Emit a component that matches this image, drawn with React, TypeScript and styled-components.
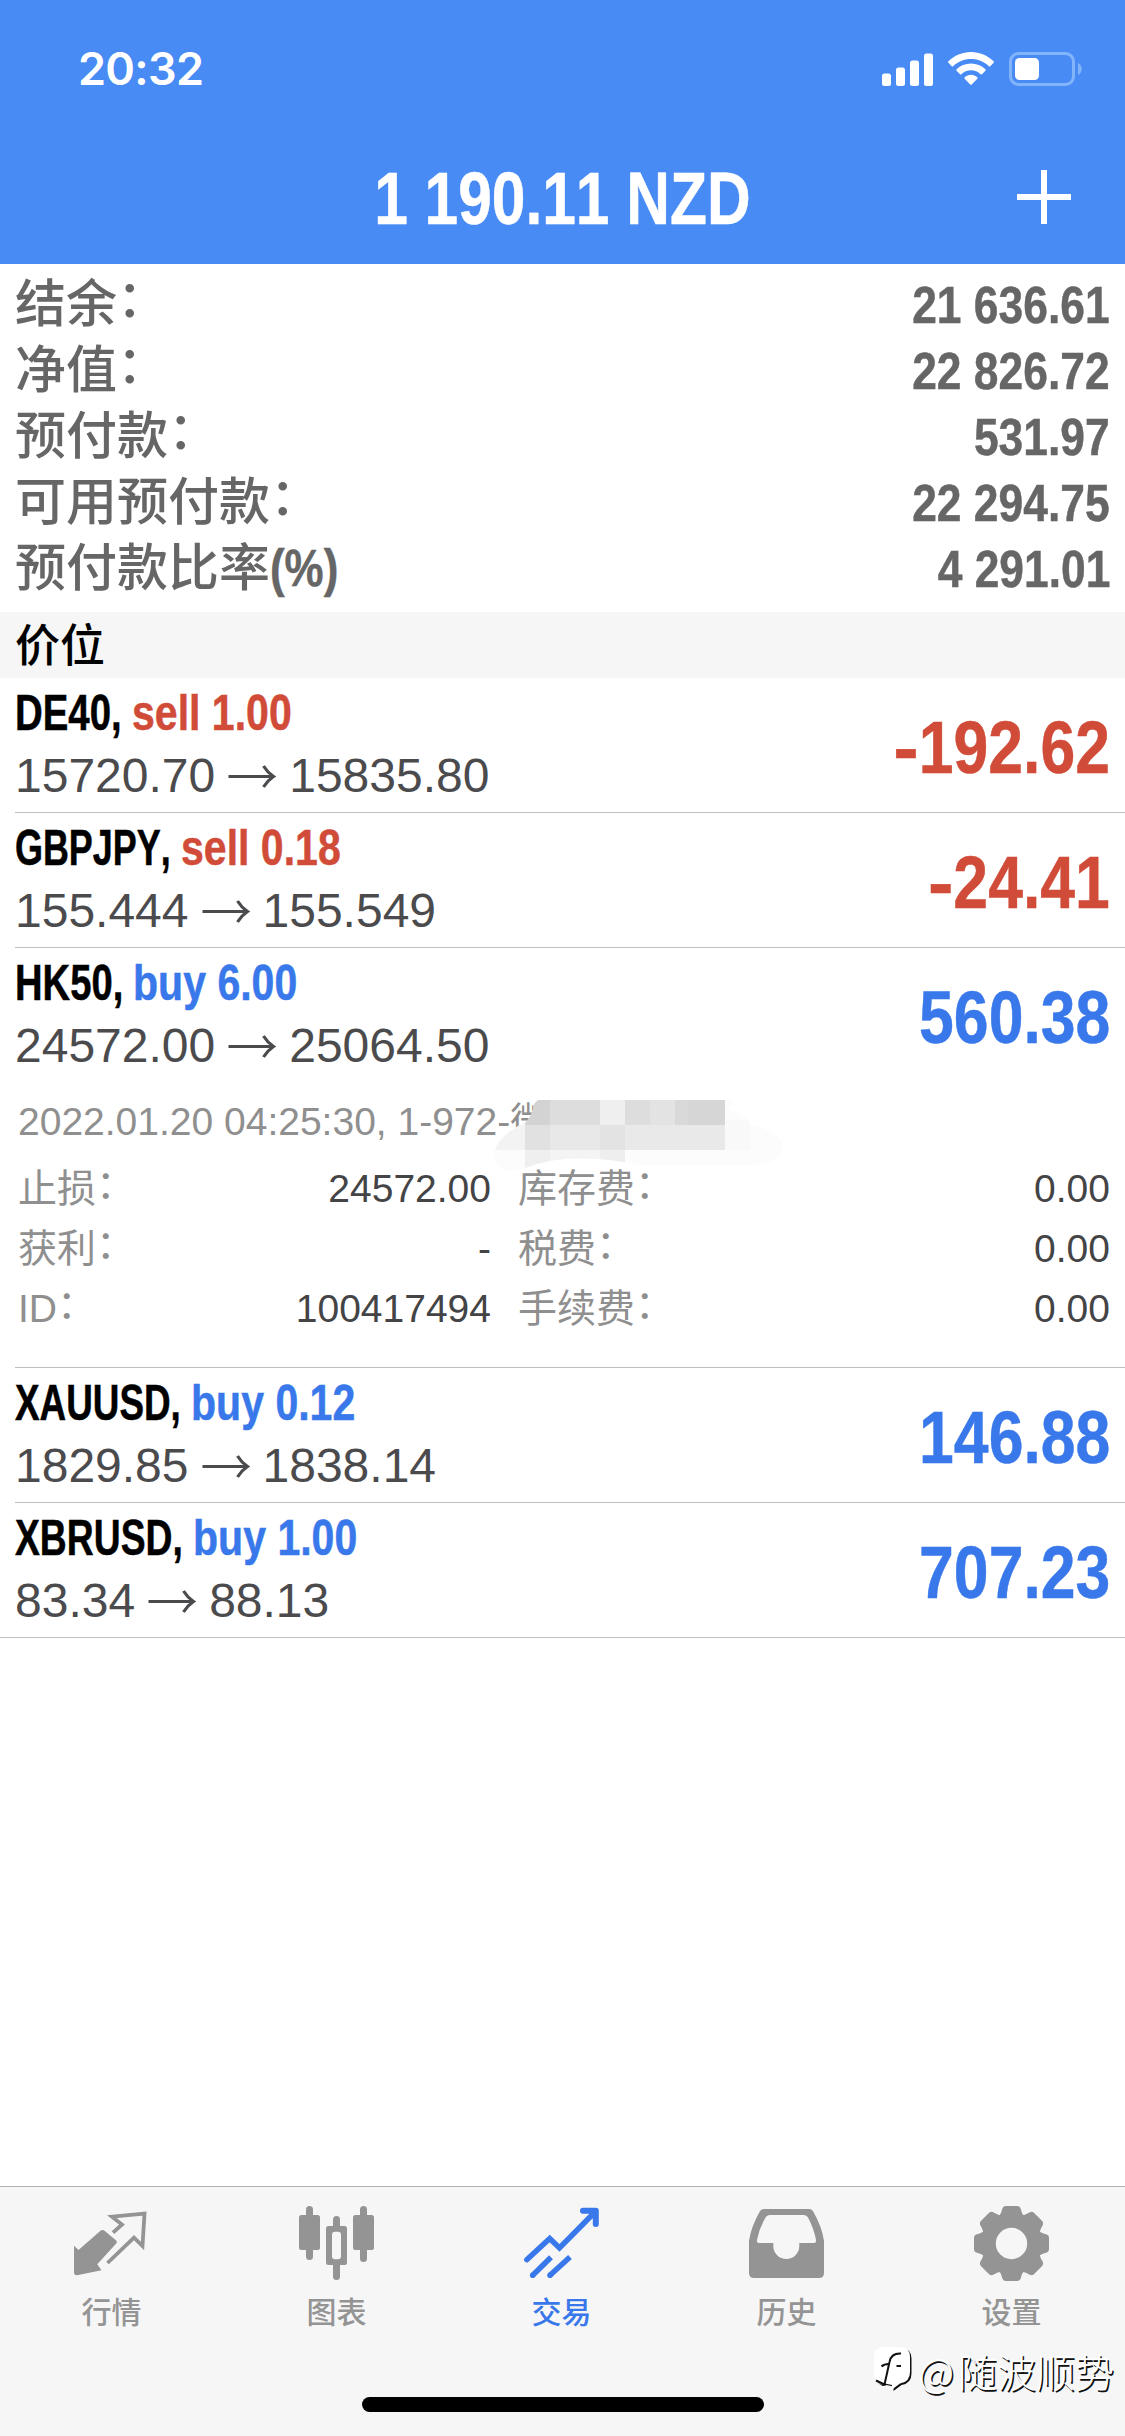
import React, { useLayoutEffect, useRef, useState } from "react";
import styled, { createGlobalStyle } from "styled-components";

const sans = `"Liberation Sans", "Noto Sans CJK SC", sans-serif`;
const color = {
  header: "#488bf5",
  panel: "#f6f6f6",
  rule: "#bfbfc1",
  buy: "#3978ea",
  sell: "#d14c38",
  muted: "#8f8f8f",
  value: "#444446",
  label: "#666666",
  icon: "#949494",
};

const GlobalStyle = createGlobalStyle`
  *, *::before, *::after { box-sizing: border-box; }
  body { margin: 0; background: #fff; font-family: ${sans}; font-kerning: none; }
`;

const Screen = styled.div`
  width: 1125px;
  height: 2436px;
  display: flex;
  flex-direction: column;
  background: #fff;
  overflow: hidden;
`;

/* Condensed text: squeezed horizontally to the requested width */
const FitBox = styled.span<{ $width: number }>`
  display: inline-block;
  width: ${(p) => p.$width}px;
  white-space: nowrap;
`;
const FitInner = styled.span`
  display: inline-block;
  transform-origin: left center;
  -webkit-text-stroke: 0.5px currentColor;
`;
function FitText({ width, children }: { width: number; children: React.ReactNode }) {
  const ref = useRef<HTMLSpanElement>(null);
  const [scale, setScale] = useState(0.8);
  useLayoutEffect(() => {
    if (ref.current) setScale(width / ref.current.offsetWidth);
  }, [width]);
  return (
    <FitBox $width={width}>
      <FitInner ref={ref} style={{ transform: `scaleX(${scale})` }}>
        {children}
      </FitInner>
    </FitBox>
  );
}

const Condensed = styled.span<{ $scale?: number; $origin?: string }>`
  display: inline-block;
  white-space: nowrap;
  font-weight: 700;
  -webkit-text-stroke: 0.5px currentColor;
  transform: scaleX(${(p) => p.$scale ?? 0.845});
  transform-origin: ${(p) => p.$origin ?? "right"} center;
`;

/* Header */
const Header = styled.header`
  height: 264px;
  flex: none;
  background: ${color.header};
  color: #fff;
`;
const StatusBar = styled.div`
  height: 132px;
  padding: 6px 43px 0 78px;
  display: flex;
  align-items: center;
  justify-content: space-between;
`;
const Clock = styled.div`
  font: 600 45px/60px Inter, ${sans};
  letter-spacing: -0.7px;
`;
const StatusIcons = styled.div`
  display: flex;
  align-items: center;
  gap: 15px;
`;
const NavBar = styled.div`
  height: 132px;
  padding: 0 54px 2px;
  display: grid;
  grid-template-columns: 54px 1fr 54px;
  align-items: center;
`;
const Title = styled.h1`
  grid-column: 2;
  margin: 4px 0 0;
  text-align: center;
  font-size: 74px;
  line-height: 84px;
`;

/* Account summary */
const Summary = styled.section`
  padding: 7px 15px 11px;
  color: ${color.label};
`;
const SummaryRow = styled.div`
  height: 66px;
  display: flex;
  justify-content: space-between;
  font-size: 51px;
  line-height: 67px;
  font-weight: 500;
`;
const SummaryValue = styled(Condensed)`
  font-size: 52.5px;
`;
const Paren = styled.span`
  font-weight: 700;
`;
/* Full-width colon, lifted to the optical centre of the line */
const Colon = styled.span`
  vertical-align: 0.1em;
  line-height: 0;
`;
const SectionTitle = styled.h2`
  height: 66px;
  margin: 0;
  padding: 1px 0 0 15px;
  background: ${color.panel};
  color: #000;
  font-size: 45px;
  line-height: 67px;
  font-weight: 500;
`;

/* Positions */
const List = styled.ul`
  flex: 1;
  margin: 0;
  padding: 0;
  list-style: none;
`;
const Item = styled.li<{ $last: boolean }>`
  margin-left: ${(p) => (p.$last ? 0 : 15)}px;
  padding-left: ${(p) => (p.$last ? 15 : 0)}px;
  border-bottom: 1px solid ${color.rule};
`;
const ItemHead = styled.div`
  height: 134px;
  padding: 5px 15px 0 0;
  display: flex;
  justify-content: space-between;
`;
const Order = styled.div`
  font-size: 48px;
`;
const Symbol = styled.div`
  display: flex;
  gap: 10px;
  font-size: 49.5px;
  line-height: 60px;
  font-weight: 700;
  color: #000;
`;
const Side = styled(Condensed)<{ $side: string }>`
  color: ${(p) => (p.$side === "buy" ? color.buy : color.sell)};
`;
const Prices = styled.div`
  display: flex;
  align-items: center;
  gap: 13px;
  height: 66px;
  line-height: 66px;
  color: #4b4b4e;
`;
const Profit = styled.div<{ $gain: boolean }>`
  font-size: 74px;
  line-height: 130px;
  color: ${(p) => (p.$gain ? color.buy : color.sell)};
`;
const Minus = styled.span`
  display: inline-block;
  transform: scaleX(1.22);
  transform-origin: right center;
`;

/* Expanded position details */
const Details = styled.div`
  position: relative;
  height: 285px;
  padding: 10px 15px 0 3px;
  font-size: 39px;
  line-height: 60px;
  color: ${color.muted};
`;
const Comment = styled.div`
  height: 67px;
  white-space: pre;
`;
const DetailGrid = styled.dl`
  margin: 0;
  display: grid;
  grid-template-columns: 473px 592px;
  column-gap: 27px;
`;
const Detail = styled.div`
  display: flex;
  justify-content: space-between;
  height: 60px;
`;
const Term = styled.dt``;
const Value = styled.dd`
  margin: 0;
  color: ${color.value};
`;
const Smudge = styled.svg`
  position: absolute;
  left: 475px;
  top: 13px;
`;

/* Tab bar */
const TabBar = styled.nav`
  position: relative;
  flex: none;
  height: 250px;
  border-top: 1px solid #b0b0b0;
  background: ${color.panel};
  display: flex;
  flex-direction: column;
  align-items: center;
  justify-content: space-between;
`;
const Tabs = styled.div`
  width: 100%;
  padding-top: 19px;
  display: grid;
  grid-template-columns: repeat(5, 1fr);
`;
const Tab = styled.div<{ $active?: boolean }>`
  display: flex;
  flex-direction: column;
  align-items: center;
  gap: 10px;
  color: ${(p) => (p.$active ? color.buy : color.icon)};
  font-size: 30px;
  line-height: 43px;
  font-weight: 500;
  padding-right: 2px;
`;
const HomeIndicator = styled.div`
  width: 402px;
  height: 15px;
  margin-bottom: 24px;
  border-radius: 8px;
  background: #000;
`;
const Credit = styled.div`
  position: absolute;
  right: 11px;
  bottom: 38px;
  display: flex;
  align-items: center;
  color: #fff;
  font: 300 39px/56px "Noto Sans CJK SC", sans-serif;
  text-shadow: 1.5px 1.5px 0.5px #111;
`;
const At = styled.span`
  margin: 0 4px 0 3px;
`;

function Signal() {
  return (
    <svg width="51" height="33" viewBox="0 0 51 33" fill="#fff">
      <rect x="0" y="20.5" width="9" height="12.5" rx="2.5" />
      <rect x="14" y="14.5" width="9" height="18.5" rx="2.5" />
      <rect x="28" y="7.5" width="9" height="25.5" rx="2.5" />
      <rect x="42" y="0.5" width="9" height="32.5" rx="2.5" />
    </svg>
  );
}
function Wifi() {
  return (
    <svg width="46" height="34" viewBox="0 0 46 34" fill="#fff">
      <path d="M23 0C14.300 0 6.300 3.500 .400 9.300a1 1 0 0 0 0 1.400l3.300 3.500a1 1 0 0 0 1.400 0C9.800 9.700 16.100 7 23 7s13.200 2.700 17.900 7.200a1 1 0 0 0 1.400 0l3.300-3.500a1 1 0 0 0 0-1.400C39.700 3.500 31.700 0 23 0z" />
      <path d="M23 11.500c-5.600 0-10.700 2.200-14.400 5.800a1 1 0 0 0 0 1.400l3.400 3.500a1 1 0 0 0 1.400 0c2.500-2.400 5.900-3.900 9.600-3.900s7.100 1.500 9.600 3.900a1 1 0 0 0 1.400 0l3.400-3.500a1 1 0 0 0 0-1.400c-3.700-3.600-8.800-5.800-14.400-5.800z" />
      <path d="M23 22.800c-2.400 0-4.600.900-6.300 2.400a1 1 0 0 0 0 1.500l5.500 5.900a1 1 0 0 0 1.500 0l5.600-5.900a1 1 0 0 0 0-1.500c-1.700-1.500-3.900-2.400-6.300-2.400z" />
    </svg>
  );
}
function Battery() {
  return (
    <svg width="73" height="34" viewBox="0 0 73 34">
      <rect x="1.500" y="1.500" width="63" height="31" rx="8" fill="none" stroke="#82b4fb" strokeWidth="3" />
      <rect x="6" y="6" width="24" height="22" rx="4.500" fill="#fff" />
      <path d="M69 11c5 2 5 10 0 12z" fill="#82b4fb" />
    </svg>
  );
}
function Plus() {
  return (
    <svg width="54" height="54" viewBox="0 0 54 54" stroke="#fff" strokeWidth="6">
      <path d="M27 0v54M0 27h54" />
    </svg>
  );
}
function Arrow() {
  return (
    <svg width="48" height="24" viewBox="0 0 48 24" fill="none" stroke="currentColor" strokeWidth="3.200">
      <path d="M.500 12.500h44M35.500 2q4 6.500 10 10.500q-6 4-10 10.500" />
    </svg>
  );
}

function QuotesIcon() {
  return (
    <svg width="75" height="75" viewBox="0 0 75 75" fill="currentColor">
      <path d="M0 39.700L4.500 44 26.500 24.800q2-1.600 4 0L42.200 34.500q1.500 1.500 0 3L23.300 58.300 27.500 64.300 3 69.300q-3 0-3-3z" />
      <path
        d="M39 26.700L48 18.500 38 10.700 70.500 7.700 68.500 40 60 31.700 33.500 57"
        fill="none"
        stroke="currentColor"
        strokeWidth="3.800"
      />
    </svg>
  );
}
function ChartIcon() {
  return (
    <svg width="75" height="75" viewBox="0 0 75 75" fill="currentColor">
      <rect x="7" y="0" width="7" height="54" rx="3.500" />
      <rect x="0" y="9" width="21" height="35" rx="2.500" />
      <rect x="34" y="10" width="7" height="64" rx="3.500" />
      <rect x="27" y="20" width="21" height="39" rx="2.500" />
      <rect x="33" y="25.700" width="9" height="27.600" rx="3" fill={color.panel} />
      <rect x="61" y="0" width="7" height="56" rx="3.500" />
      <rect x="54" y="9" width="21" height="35" rx="2.500" />
    </svg>
  );
}
function TradeIcon() {
  return (
    <svg width="75" height="75" viewBox="0 0 75 75" fill="none" stroke="currentColor" strokeWidth="5.500">
      <path d="M2.800 53.700L25.700 32.500 35.500 42 70 7" strokeLinecap="round" />
      <path d="M59 4.800H71.800V18" strokeWidth="6" strokeLinecap="round" strokeLinejoin="round" />
      <path d="M64 6h8v9z" fill="currentColor" stroke="none" />
      <path d="M8.700 69.300L27 51.300M26 69.300L46 51" />
      <circle cx="8.700" cy="69.300" r="2.800" fill="currentColor" stroke="none" />
      <circle cx="26" cy="69.300" r="2.800" fill="currentColor" stroke="none" />
    </svg>
  );
}
function HistoryIcon() {
  return (
    <svg width="75" height="75" viewBox="0 0 75 75" fill="currentColor" fillRule="evenodd">
      <path d="M15 3H60q3 0 4.500 3Q73 21 75 35V67q0 5-5 5H5q-5 0-5-5V35Q2 21 10.500 6 12 3 15 3zM21 9q-3.500 0-5 3.500Q10 23 8 34q-.500 3 2 3H24.300V40a13 13 0 0 0 26 0V37H65q2.500 0 2-3-2-11-7.500-21.500Q58 9 54.500 9z" />
    </svg>
  );
}
function SettingsIcon() {
  return (
    <svg width="75" height="75" viewBox="-37.500 -37.500 75 75" fill="currentColor">
      <circle r="22.900" fill="none" stroke="currentColor" strokeWidth="14.400" />
      {[0, 45, 90, 135, 180, 225, 270, 315].map((angle) => (
        <path
          key={angle}
          transform={`rotate(${angle})`}
          d="M-13.500-26.500Q-10.500-29-9.300-34.500-8.500-37.500-5.500-37.500H5.500Q8.500-37.500 9.300-34.500 10.500-29 13.500-26.500L0-20z"
        />
      ))}
    </svg>
  );
}
function CreditLogo() {
  const bubble = "M11 1H27Q37 1 37 11V26Q37 36 27 37.500L19 43.500V39L12 37.500 8 38.500Q1 35 1 28V12Q1 1 11 1z";
  return (
    <svg width="42" height="48" viewBox="0 0 42 48">
      <path d={bubble} transform="translate(1.500 1.500)" fill="#111" />
      <path d={bubble} fill="#fff" />
      <path d="M28 7.500Q18 7 16.500 16L11.500 38.500 3 34.500" fill="none" stroke="#111" strokeWidth="2" />
      <path d="M8.500 20.500Q11 18 16 18M23.500 20H28" fill="none" stroke="#111" strokeWidth="2.200" />
    </svg>
  );
}

function MosaicSmudge() {
  return (
    <Smudge width="300" height="90" viewBox="490 1095 300 90">
      <defs>
        <clipPath id="smear">
          <path d="M538 1100H725L733 1102 727 1110Q750 1116 750 1125 780 1132 783 1145 780 1165 750 1165H640Q570 1150 525 1168 494 1178 494 1152 500 1134 526 1122 533 1114 534 1104z" />
        </clipPath>
      </defs>
      <g clipPath="url(#smear)">
        <rect x="490" y="1095" width="300" height="90" fill="#fcfcfc" />
        <rect x="725" y="1120" width="25" height="30" fill="#f9f9f9" />
        <rect x="490" y="1125" width="35" height="25" fill="#f3f3f3" />
        <rect x="525" y="1100" width="25" height="25" fill="#d3d3d3" />
        <rect x="550" y="1100" width="50" height="25" fill="#dddddd" />
        <rect x="600" y="1100" width="25" height="25" fill="#efefef" />
        <rect x="625" y="1100" width="25" height="25" fill="#dddddd" />
        <rect x="650" y="1100" width="25" height="25" fill="#e3e3e3" />
        <rect x="675" y="1100" width="13" height="25" fill="#d9d9d9" />
        <rect x="688" y="1100" width="37" height="25" fill="#d6d6d6" />
        <rect x="525" y="1125" width="25" height="25" fill="#e1e1e1" />
        <rect x="550" y="1125" width="50" height="25" fill="#e8e8e8" />
        <rect x="600" y="1125" width="25" height="25" fill="#e3e3e3" />
        <rect x="625" y="1125" width="100" height="25" fill="#e9e9e9" />
        <rect x="525" y="1150" width="25" height="25" fill="#efefef" />
        <rect x="550" y="1150" width="50" height="25" fill="#f4f4f4" />
        <rect x="600" y="1150" width="25" height="25" fill="#eeeeee" />
      </g>
    </Smudge>
  );
}

const summary = [
  { label: "结余", value: "21 636.61" },
  { label: "净值", value: "22 826.72" },
  { label: "预付款", value: "531.97" },
  { label: "可用预付款", value: "22 294.75" },
  { label: "预付款比率", suffix: "(%)", value: "4 291.01" },
];

const positions = [
  { symbol: "DE40,", width: 107, side: "sell", lots: "1.00", open: "15720.70", now: "15835.80", profit: "-192.62" },
  { symbol: "GBPJPY,", width: 156, side: "sell", lots: "0.18", open: "155.444", now: "155.549", profit: "-24.41" },
  {
    symbol: "HK50,", width: 108, side: "buy", lots: "6.00", open: "24572.00", now: "25064.50", profit: "560.38",
    comment: "2022.01.20 04:25:30, 1-972-微",
    details: [
      ["止损", "24572.00"],
      ["库存费", "0.00"],
      ["获利", "-"],
      ["税费", "0.00"],
      ["ID", "100417494"],
      ["手续费", "0.00"],
    ],
  },
  { symbol: "XAUUSD,", width: 166, side: "buy", lots: "0.12", open: "1829.85", now: "1838.14", profit: "146.88" },
  { symbol: "XBRUSD,", width: 168, side: "buy", lots: "1.00", open: "83.34", now: "88.13", profit: "707.23" },
];

const tabs = [
  { name: "行情", Icon: QuotesIcon },
  { name: "图表", Icon: ChartIcon },
  { name: "交易", Icon: TradeIcon, active: true },
  { name: "历史", Icon: HistoryIcon },
  { name: "设置", Icon: SettingsIcon },
];

function Amount({ value }: { value: string }) {
  const negative = value.startsWith("-");
  return (
    <Profit $gain={!negative}>
      <Condensed>
        {negative && <Minus>-</Minus>}
        {negative ? value.slice(1) : value}
      </Condensed>
    </Profit>
  );
}

export default function App() {
  return (
    <Screen>
      <GlobalStyle />
      <Header>
        <StatusBar>
          <Clock>20:32</Clock>
          <StatusIcons>
            <Signal />
            <Wifi />
            <Battery />
          </StatusIcons>
        </StatusBar>
        <NavBar>
          <Title>
            <Condensed $scale={0.817} $origin="center">1 190.11 NZD</Condensed>
          </Title>
          <Plus />
        </NavBar>
      </Header>

      <Summary>
        {summary.map((row) => (
          <SummaryRow key={row.label}>
            <span>
              {row.label}
              {row.suffix ? (
                <Paren>
                  <FitText width={68}>{row.suffix}</FitText>
                </Paren>
              ) : (
                <Colon>：</Colon>
              )}
            </span>
            <SummaryValue>{row.value}</SummaryValue>
          </SummaryRow>
        ))}
      </Summary>

      <SectionTitle>价位</SectionTitle>
      <List>
        {positions.map((p, i) => (
          <Item key={p.symbol} $last={i === positions.length - 1}>
            <ItemHead>
              <Order>
                <Symbol>
                  <FitText width={p.width}>{p.symbol}</FitText>
                  <Side $side={p.side} $scale={0.829} $origin="left">
                    {p.side} {p.lots}
                  </Side>
                </Symbol>
                <Prices>
                  <span>{p.open}</span>
                  <Arrow />
                  <span>{p.now}</span>
                </Prices>
              </Order>
              <Amount value={p.profit} />
            </ItemHead>
            {p.details && (
              <Details>
                <Comment>{p.comment}</Comment>
                <DetailGrid>
                  {p.details.map(([term, value]) => (
                    <Detail key={term}>
                      <Term>
                        {term}
                        <Colon>：</Colon>
                      </Term>
                      <Value>{value}</Value>
                    </Detail>
                  ))}
                </DetailGrid>
                <MosaicSmudge />
              </Details>
            )}
          </Item>
        ))}
      </List>

      <TabBar>
        <Tabs>
          {tabs.map(({ name, Icon, active }) => (
            <Tab key={name} $active={active}>
              <Icon />
              {name}
            </Tab>
          ))}
        </Tabs>
        <HomeIndicator />
        <Credit>
          <CreditLogo />
          <At>@</At>
          <span>随波顺势</span>
        </Credit>
      </TabBar>
    </Screen>
  );
}
